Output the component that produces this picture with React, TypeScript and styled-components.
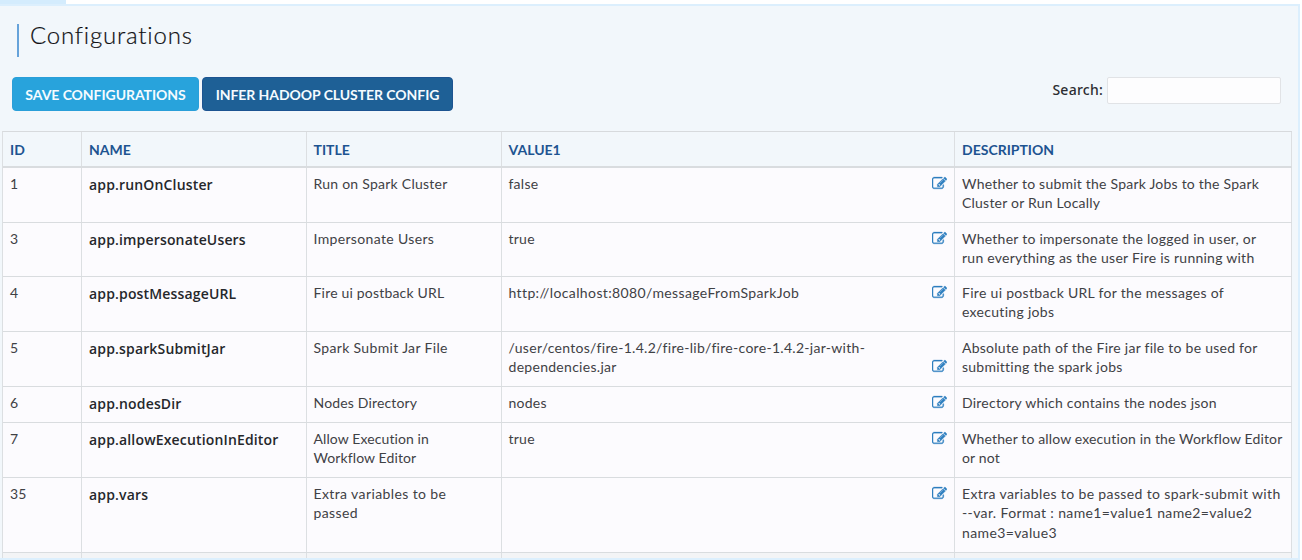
import React from 'react';
import styled, { createGlobalStyle } from 'styled-components';

const GlobalStyle = createGlobalStyle`
  * { box-sizing: border-box; }
  body { margin: 0; background: #fff; overflow: hidden; font-family: Lato, "Liberation Sans", sans-serif; color: #3f4145; }
`;

const Page = styled.div`
  width: 1300px;
  height: 560px;
  display: flex;
  flex-direction: column;
`;

const TabStrip = styled.div`
  height: 4px;
  flex: none;
`;

const ActiveTab = styled.div`
  width: 66px;
  height: 4px;
  background: #d4ecfd;
`;

const Panel = styled.main`
  flex: 1;
  min-height: 0;
  overflow: hidden;
  background: #f2f7fb;
  border: 2px solid #dceffd;
  border-left: 0;
`;

const Heading = styled.h1`
  margin: 18px 0 0 17px;
  height: 33px;
  padding: 0 0 12px 11px;
  border-left: 2px solid #66a3da;
  font-size: 24px;
  font-weight: 300;
  line-height: 21px;
  letter-spacing: 0.8px;
  color: #101114;
  -webkit-text-stroke: 0.2px #101114;
`;

const Toolbar = styled.div`
  display: flex;
  justify-content: space-between;
  align-items: flex-start;
  height: 54px;
  margin-top: 20px;
  padding: 0 17px 0 12px;
`;

const ButtonGroup = styled.div`
  display: flex;
  gap: 3px;
`;

const Button = styled.button<{ $primary?: boolean; $width: number }>`
  width: ${(p) => p.$width}px;
  height: 34px;
  padding: 1px 0 0;
  border: 1px solid ${(p) => (p.$primary ? '#1d5491' : '#2a9fd9')};
  border-radius: 4px;
  background: ${(p) => (p.$primary ? '#1e6096' : '#28a3dc')};
  color: #f5fbff;
  font: 700 14px Lato, sans-serif;
  letter-spacing: -0.06px;
  white-space: nowrap;
`;

const SearchLabel = styled.label`
  display: flex;
  align-items: center;
  gap: 4px;
  font: 500 14px/25px "Noto Sans", sans-serif;
  letter-spacing: 0.25px;
  color: #2b2d31;
`;

const SearchText = styled.span`
  padding-bottom: 2px;
`;

const SearchInput = styled.input`
  width: 174px;
  height: 27px;
  border: 1px solid #e1e3e6;
  border-radius: 2px;
  background: #fdfdfe;
`;

const Table = styled.div`
  width: 1290px;
  margin-left: 2px;
  border-top: 1px solid #d7dadd;
  border-left: 1px solid #dcdfe2;
`;

const Row = styled.div<{ $height: number; $head?: boolean; $shaded?: boolean }>`
  display: grid;
  grid-template-columns: 79px 224.5px 195px 453.5px 337px;
  height: ${(p) => p.$height}px;
  border-bottom: ${(p) => (p.$head ? 2 : 1)}px solid #d9dcdf;
  background: ${(p) => (p.$head ? '#f2f7fb' : p.$shaded ? '#f3f4f6' : '#fcfbfe')};
`;

const Cell = styled.div`
  display: flex;
  justify-content: space-between;
  padding: 6px 7px 0;
  border-right: 1px solid #dcdfe2;
  font-size: 14px;
  line-height: 19.3px;
  letter-spacing: 0.25px;
  white-space: nowrap;
`;

const HeadCell = styled(Cell)`
  padding-top: 8px;
  font-weight: 700;
  letter-spacing: 0;
  color: #1d5491;
`;

const NameCell = styled(Cell)`
  padding-top: 7px;
  font-family: "Open Sans", sans-serif;
  font-weight: 600;
  letter-spacing: 0.16px;
  color: #25272b;
`;

const Line = styled.span<{ $spacing: number }>`
  display: block;
  letter-spacing: ${(p) => p.$spacing}px;
`;

const Edit = styled.svg<{ $low?: boolean }>`
  width: 15px;
  height: 15px;
  flex: none;
  margin-top: ${(p) => (p.$low ? 21 : 2)}px;
  margin-right: 0.5px;
  fill: #2e7fc0;
  stroke: #2e7fc0;
  stroke-width: 36;
`;

function EditIcon({ low }: { low?: boolean }) {
  return (
    <Edit $low={low} viewBox="0 0 1792 1792">
      <path d="M888 1184l116-116-152-152-116 116v56h96v96h56zm440-720q-16-16-33 1l-350 350q-17 17-1 33t33-1l350-350q17-17 1-33zm80 594v190q0 119-84.5 203.5t-203.5 84.5h-832q-119 0-203.5-84.5t-84.5-203.5v-832q0-119 84.5-203.5t203.5-84.5h832q63 0 117 25 15 7 18 23 3 17-9 29l-49 49q-14 14-32 8-23-6-45-6h-832q-66 0-113 47t-47 113v832q0 66 47 113t113 47h832q66 0 113-47t47-113v-126q0-13 9-22l64-64q15-15 35-7t20 29zm-96-738l288 288-672 672h-288v-288zm444 132l-92 92-288-288 92-92q28-28 68-28t68 28l152 152q28 28 28 68t-28 68z" />
    </Edit>
  );
}

function Lines({ text, spacing = 0.25 }: { text: string[]; spacing?: number }) {
  return (
    <div>
      {text.map((line) => (
        <Line key={line} $spacing={spacing}>{line}</Line>
      ))}
    </div>
  );
}

interface Config {
  id: number;
  name: string;
  title: string[];
  value: string[];
  description: string[];
  height: number;
  titleSpacing?: number;
  valueSpacing?: number;
  descriptionSpacing?: number;
}

const configs: Config[] = [
  { id: 1, name: 'app.runOnCluster', title: ['Run on Spark Cluster'], value: ['false'], description: ['Whether to submit the Spark Jobs to the Spark', 'Cluster or Run Locally'], height: 55, descriptionSpacing: 0.22 },
  { id: 3, name: 'app.impersonateUsers', title: ['Impersonate Users'], value: ['true'], description: ['Whether to impersonate the logged in user, or', 'run everything as the user Fire is running with'], height: 54, titleSpacing: 0.35 },
  { id: 4, name: 'app.postMessageURL', title: ['Fire ui postback URL'], value: ['http://localhost:8080/messageFromSparkJob'], description: ['Fire ui postback URL for the messages of', 'executing jobs'], height: 55, titleSpacing: 0.19, valueSpacing: 0.38, descriptionSpacing: 0.3 },
  { id: 5, name: 'app.sparkSubmitJar', title: ['Spark Submit Jar File'], value: ['/user/centos/fire-1.4.2/fire-lib/fire-core-1.4.2-jar-with-', 'dependencies.jar'], description: ['Absolute path of the Fire jar file to be used for', 'submitting the spark jobs'], height: 55, titleSpacing: 0.34, valueSpacing: 0.29 },
  { id: 6, name: 'app.nodesDir', title: ['Nodes Directory'], value: ['nodes'], description: ['Directory which contains the nodes json'], height: 36, titleSpacing: 0.16, descriptionSpacing: 0.23 },
  { id: 7, name: 'app.allowExecutionInEditor', title: ['Allow Execution in', 'Workflow Editor'], value: ['true'], description: ['Whether to allow execution in the Workflow Editor', 'or not'], height: 55, titleSpacing: 0.1, descriptionSpacing: 0.14 },
  { id: 35, name: 'app.vars', title: ['Extra variables to be', 'passed'], value: [], description: ['Extra variables to be passed to spark-submit with', '--var. Format : name1=value1 name2=value2', 'name3=value3'], height: 75, titleSpacing: 0.39, descriptionSpacing: 0.37 },
];

export default function App() {
  return (
    <Page>
      <GlobalStyle />
      <TabStrip>
        <ActiveTab />
      </TabStrip>
      <Panel>
        <Heading>Configurations</Heading>
        <Toolbar>
          <ButtonGroup>
            <Button $width={187}>SAVE CONFIGURATIONS</Button>
            <Button $primary $width={251}>INFER HADOOP CLUSTER CONFIG</Button>
          </ButtonGroup>
          <SearchLabel>
            <SearchText>Search:</SearchText>
            <SearchInput />
          </SearchLabel>
        </Toolbar>
        <Table>
          <Row $head $height={36}>
            {['ID', 'NAME', 'TITLE', 'VALUE1', 'DESCRIPTION'].map((h) => (
              <HeadCell key={h}>{h}</HeadCell>
            ))}
          </Row>
          {configs.map((c) => (
            <Row key={c.id} $height={c.height}>
              <Cell>{c.id}</Cell>
              <NameCell>{c.name}</NameCell>
              <Cell><Lines text={c.title} spacing={c.titleSpacing} /></Cell>
              <Cell>
                <Lines text={c.value} spacing={c.valueSpacing} />
                <EditIcon low={c.value.length > 1} />
              </Cell>
              <Cell><Lines text={c.description} spacing={c.descriptionSpacing} /></Cell>
            </Row>
          ))}
          <Row $shaded $height={20}>
            <Cell />
            <Cell />
            <Cell />
            <Cell />
            <Cell />
          </Row>
        </Table>
      </Panel>
    </Page>
  );
}
